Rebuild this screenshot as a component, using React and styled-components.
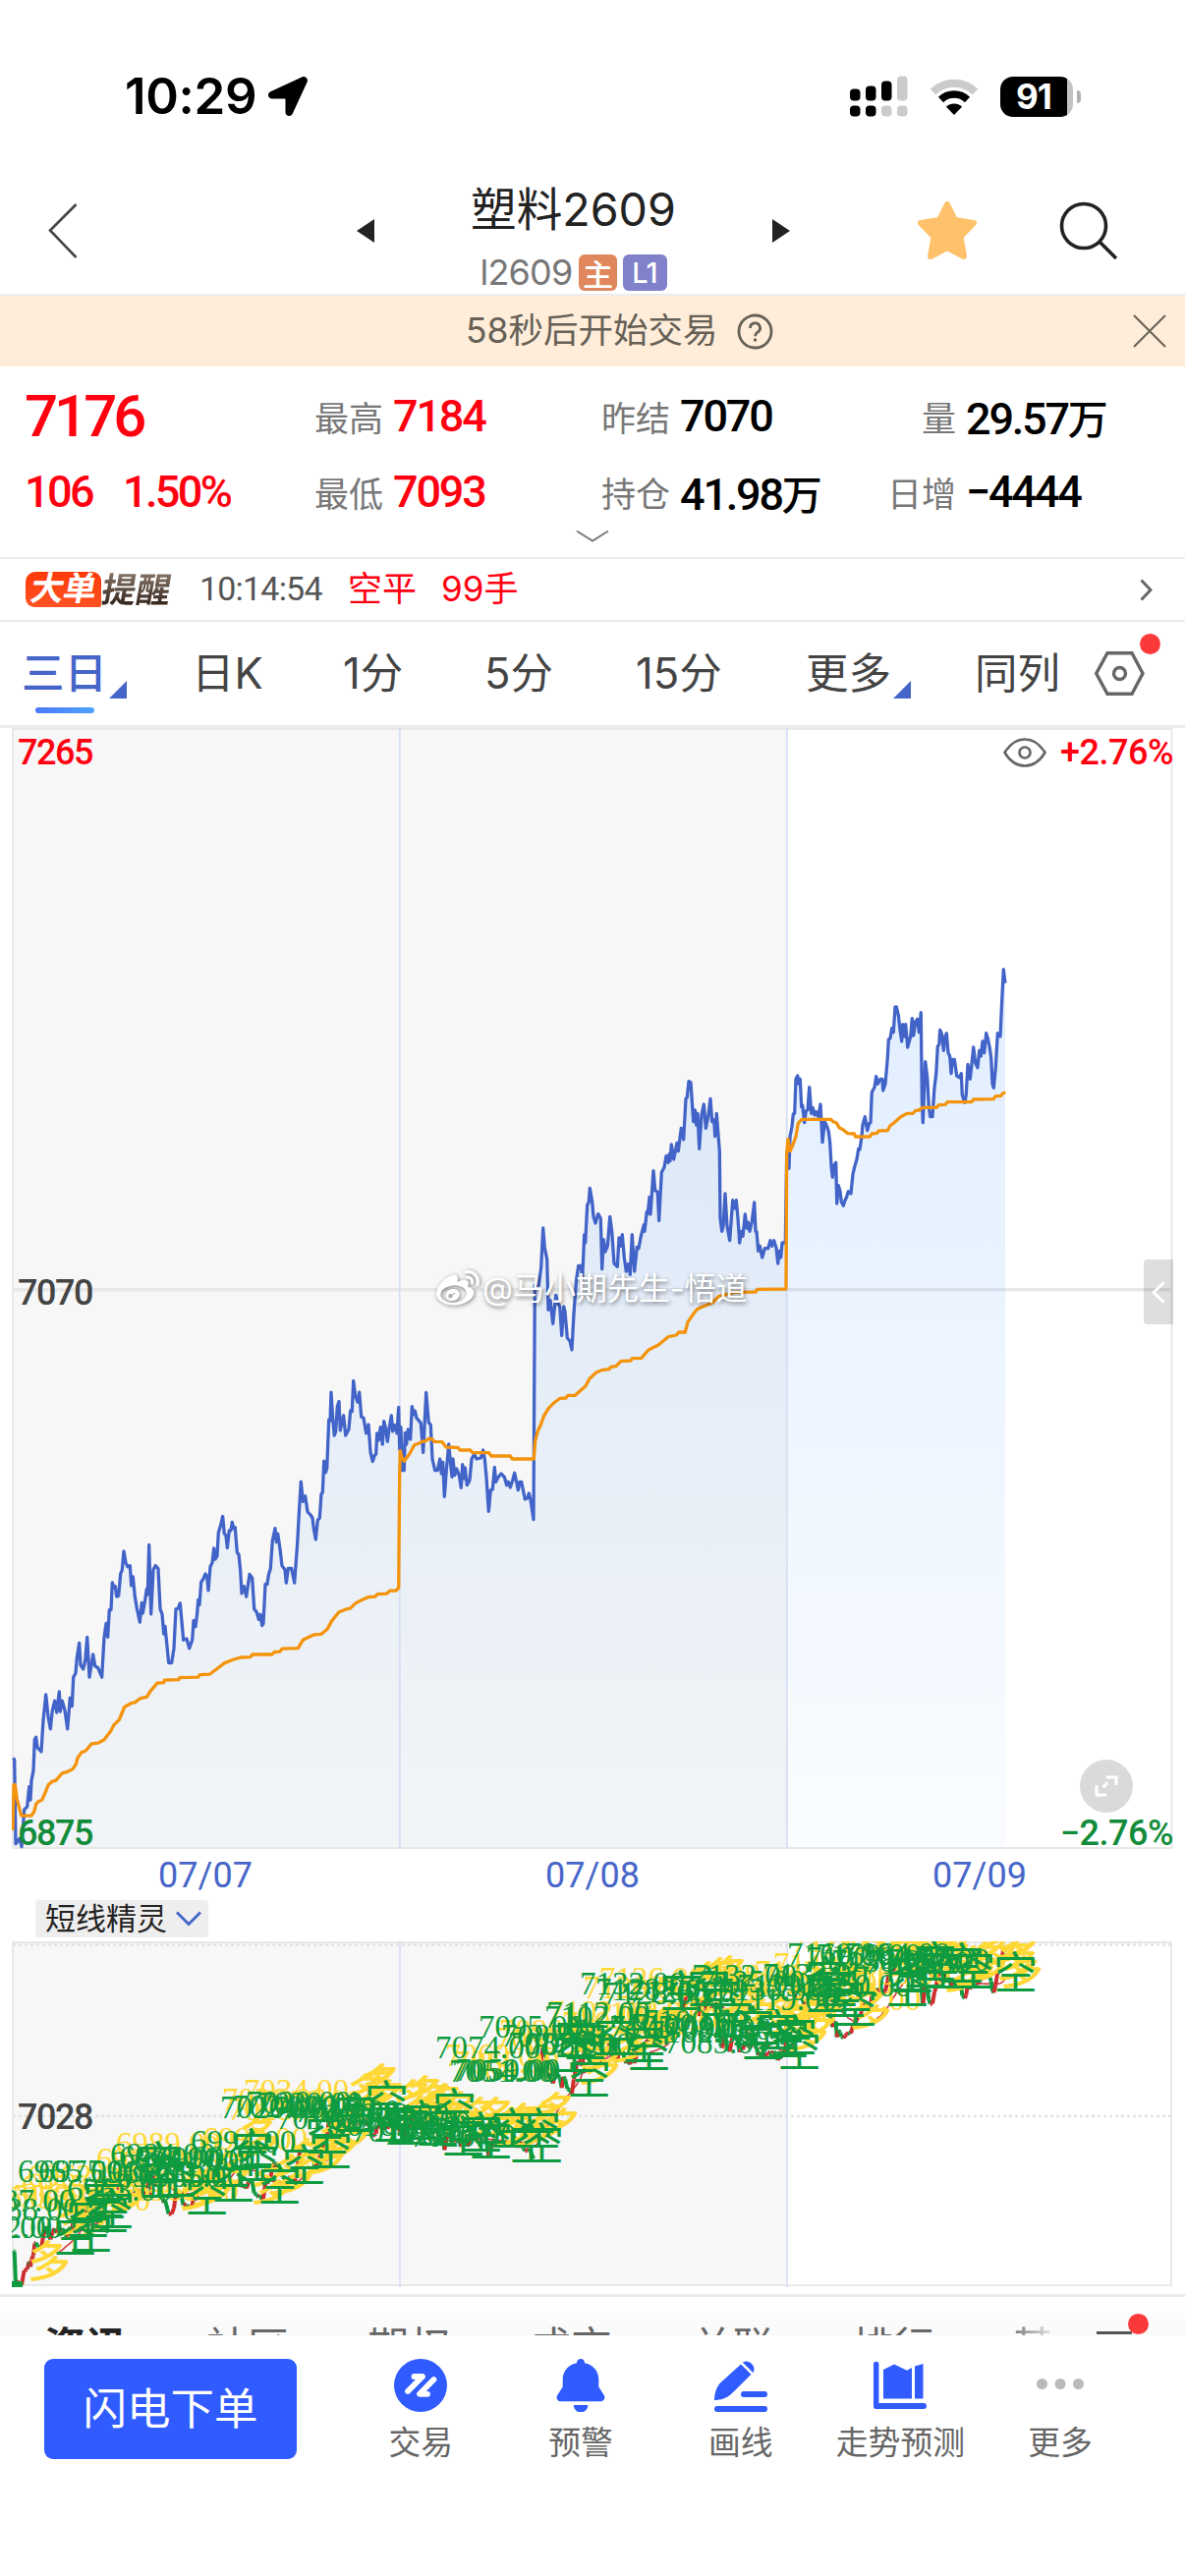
import React from 'react';
import styled, { createGlobalStyle } from 'styled-components';
import { FaLocationArrow, FaWeibo } from 'react-icons/fa';

const GlobalStyle = createGlobalStyle`
  * {
    box-sizing: border-box;
  }
  body {
    margin: 0;
    background: #fff;
    font-family: Inter, 'Noto Sans CJK SC', sans-serif;
    color: #222;
  }
  svg {
    display: block;
  }
`;

const NUMERIC = `Roboto, 'Noto Sans CJK SC', sans-serif`;

const Screen = styled.div`
  width: 1206px;
  height: 2622px;
  overflow: hidden;
  display: flex;
  flex-direction: column;
  background: #fff;
`;

const StatusBar = styled.div`
  height: 178px;
  padding: 73px 106px 0 127px;
  display: flex;
  align-items: flex-start;
  justify-content: space-between;
  flex-shrink: 0;
`;

const Clock = styled.div`
  display: flex;
  align-items: center;
  gap: 12px;
  height: 50px;
  font-size: 51px;
  font-weight: 600;
  line-height: 50px;
  letter-spacing: -0.3px;
  color: #000;
`;

const StatusIcons = styled.div`
  display: flex;
  align-items: center;
  gap: 22px;
  height: 50px;
`;

const Battery = styled.div`
  display: flex;
  align-items: center;
  gap: 4px;
`;

const BatteryBody = styled.div`
  width: 74px;
  height: 41px;
  border-radius: 13px;
  background: linear-gradient(90deg, #000 68px, #c4c4c4 68px);
  color: #fff;
  font-size: 35px;
  font-weight: 700;
  line-height: 41px;
  padding-left: 16px;
  letter-spacing: -1px;
`;

const BatteryNub = styled.div`
  width: 4px;
  height: 13px;
  border-radius: 0 4px 4px 0;
  background: #b0b0b0;
`;

const Header = styled.div`
  height: 123px;
  flex-shrink: 0;
  display: grid;
  grid-template-columns: 362px 112px 219px 238px 142px 1fr;
  border-bottom: 2px solid #ececec;
`;

const HeaderCell = styled.div`
  padding: ${({ $pad }) => $pad};
`;

const Titles = styled.div`
  display: flex;
  flex-direction: column;
  align-items: center;
`;

const Title = styled.div`
  font-size: 46.6px;
  line-height: 56px;
  margin-top: 7px;
  white-space: nowrap;
`;

const SubTitle = styled.div`
  display: flex;
  align-items: center;
  gap: 6px;
  height: 38px;
  margin-top: 17px;
  font-size: 36px;
  letter-spacing: -0.8px;
  color: #777;
  white-space: nowrap;
`;

const Badge = styled.span`
  display: flex;
  align-items: center;
  justify-content: center;
  height: 37px;
  width: ${({ $width }) => $width}px;
  border-radius: 6px;
  background: ${({ $color }) => $color};
  color: #fff;
  font-size: ${({ $size }) => $size}px;
  font-weight: 500;
`;

const Notice = styled.div`
  height: 72px;
  flex-shrink: 0;
  display: flex;
  align-items: center;
  padding: 0 19px 0 474px;
  gap: 19px;
  background: #ffedd9;
  color: #666056;
  font-size: 35.5px;
  line-height: 72px;

  svg:last-child {
    margin-left: auto;
  }
`;

const Quote = styled.div`
  height: 196px;
  flex-shrink: 0;
  position: relative;
  border-bottom: 2px solid #eee;
  padding-top: 12px;
  font-family: ${NUMERIC};
`;

const QuoteRow = styled.div`
  height: 77px;
  display: grid;
  grid-template-columns: 295px 292px 291px 1fr;
  align-items: center;
  padding-left: 25px;
  white-space: nowrap;
`;

const LastPrice = styled.div`
  font-size: 60px;
  font-weight: 500;
  letter-spacing: -4px;
  line-height: 74px;
  color: #ff0010;
`;

const Change = styled.div`
  display: flex;
  gap: 31px;
  font-size: 45px;
  font-weight: 500;
  letter-spacing: -2.6px;
  color: #ff0010;
`;

const Stat = styled.div`
  display: flex;
  align-items: center;
  gap: 10px;
  font-size: 45px;
  font-weight: 500;
  letter-spacing: -2.2px;
  color: ${({ $up }) => ($up ? '#ff0010' : '#000')};
`;

const StatLabel = styled.span`
  width: 70px;
  font-size: 35px;
  font-weight: 400;
  letter-spacing: 0;
  text-align: right;
  color: #777;
`;

const Unit = styled.span`
  font-size: 41px;
  font-weight: 500;
`;

const ExpandArrow = styled.svg`
  position: absolute;
  left: 586px;
  bottom: 14px;
`;

const AlertRow = styled.div`
  height: 64px;
  flex-shrink: 0;
  display: flex;
  align-items: center;
  padding: 0 33px 0 26px;
  border-bottom: 2px solid #ececec;
  font-size: 35px;
  line-height: 44px;
  white-space: nowrap;
`;

const AlertTag = styled.div`
  width: 77px;
  height: 36px;
  border-radius: 10px 9px 2px 9px;
  background: linear-gradient(#ff3a08, #ff5224);
  color: #fff;
  font-size: 34px;
  font-weight: 700;
  line-height: 34px;
  text-align: center;
  letter-spacing: -1px;

  span {
    display: block;
    transform: skewX(-10deg);
  }
`;

const AlertName = styled.div`
  width: 71px;
  margin: 0 28px 0 1px;
  font-size: 35px;
  font-weight: 700;
  line-height: 38px;
  background: linear-gradient(#8d7a6c, #2c1d14);
  -webkit-background-clip: text;
  background-clip: text;
  color: transparent;
  transform: skewX(-10deg);
`;

const AlertTime = styled.div`
  width: 151px;
  padding-bottom: 2px;
  font-family: ${NUMERIC};
  font-size: 34px;
  letter-spacing: -0.8px;
  color: #555;
`;

const AlertText = styled.div`
  display: flex;
  gap: 25px;
  padding-bottom: 3px;
  color: #ff0010;
  flex: 1;
`;

const Tabs = styled.div`
  height: 108px;
  flex-shrink: 0;
  display: grid;
  grid-template-columns: 173px 154px 144px 154px 173px 172px 119px 1fr;
  padding-left: 22px;
  border-bottom: 3px solid #ececec;
  font-size: 43.5px;
  line-height: 105px;
  color: #444;
  white-space: nowrap;
`;

const Tab = styled.div`
  position: relative;
  color: ${({ $active }) => ($active ? '#4565c8' : 'inherit')};
  font-weight: ${({ $active }) => ($active ? 500 : 400)};
`;

const Corner = styled.span`
  position: absolute;
  left: 89px;
  top: 60px;
  width: 18px;
  height: 18px;
  background: #4565c8;
  clip-path: polygon(100% 0, 100% 100%, 0 100%);
`;

const Underline = styled.span`
  position: absolute;
  left: 14px;
  top: 87px;
  width: 60px;
  height: 6px;
  border-radius: 3px;
  background: linear-gradient(90deg, #4b78f8, #4fa3ff);
`;

const RedDot = styled.span`
  position: absolute;
  right: ${({ $right }) => $right}px;
  top: ${({ $top }) => $top}px;
  width: 21px;
  height: 21px;
  border-radius: 50%;
  background: #fa3a3a;
`;

const ChartBox = styled.div`
  position: relative;
  height: ${({ $height }) => $height}px;
  width: 1182px;
  margin-left: 12px;
  flex-shrink: 0;
`;

const AxisLabel = styled.div`
  position: absolute;
  top: ${({ $top }) => $top}px;
  ${({ $side }) => ($side === 'right' ? 'right: 0' : 'left: 6px')};
  display: flex;
  align-items: center;
  gap: 14px;
  font-family: ${NUMERIC};
  font-size: 36px;
  font-weight: 500;
  line-height: 36px;
  letter-spacing: ${({ $side }) => ($side === 'right' ? -0.5 : -1.5)}px;
  color: ${({ $color }) => $color};
`;

const Watermark = styled.div`
  position: absolute;
  left: 432px;
  top: 548px;
  display: flex;
  align-items: center;
  gap: 3px;
  font-size: 32px;
  line-height: 46px;
  color: #fff;
  white-space: nowrap;
  text-shadow: 1px 2px 4px rgba(0, 0, 0, 0.5);

  svg {
    filter: drop-shadow(1px 1px 2px rgba(0, 0, 0, 0.5));
  }
`;

const SideHandle = styled.div`
  position: absolute;
  right: 0;
  top: 541px;
  width: 30px;
  height: 66px;
  border-radius: 4px 0 0 4px;
  background: rgba(0, 0, 0, 0.13);
  padding: 22px 0 0 7px;
`;

const FullScreen = styled.div`
  position: absolute;
  left: 1087px;
  top: 1050px;
  width: 54px;
  height: 54px;
  border-radius: 50%;
  background: #dadada;
  display: flex;
  align-items: center;
  justify-content: center;
`;

const Dates = styled.div`
  height: 51px;
  flex-shrink: 0;
  display: grid;
  grid-template-columns: repeat(3, 394px);
  padding-left: 12px;
  text-align: center;
  font-family: ${NUMERIC};
  font-size: 36px;
  line-height: 53px;
  color: #4766c8;
`;

const IndicatorBar = styled.div`
  height: 42px;
  flex-shrink: 0;
  padding-left: 36px;
`;

const IndicatorButton = styled.div`
  width: 176px;
  height: 38px;
  border-radius: 4px;
  background: #eee;
  display: flex;
  align-items: center;
  gap: 9px;
  padding-left: 10px;
  font-size: 31px;
  line-height: 36px;
  white-space: nowrap;
`;

const NewsTabs = styled.div`
  position: relative;
  margin-top: 7px;
  height: 42px;
  flex-shrink: 0;
  overflow: hidden;
  display: grid;
  grid-template-columns: 165px 164px 165px 165px 163px 163px 1fr;
  padding: 26px 0 0 45px;
  border-top: 3px solid #eaeaea;
  background: linear-gradient(#fff, #f9f9f9);
  font-size: 42px;
  line-height: 50px;
  color: #666;
`;

const NewsTab = styled.div`
  font-weight: ${({ $active }) => ($active ? 700 : 400)};
  color: ${({ $active }) => ($active ? '#222' : 'inherit')};
`;

const FadedTab = styled.div`
  width: 44px;
  overflow: hidden;
  background: linear-gradient(90deg, #777, #eee);
  -webkit-background-clip: text;
  background-clip: text;
  color: transparent;
`;

const MenuLine = styled.span`
  position: absolute;
  right: 54px;
  top: 35px;
  width: 36px;
  height: 3px;
  background: #555;
`;

const Toolbar = styled.div`
  height: 245px;
  flex-shrink: 0;
  display: flex;
  align-items: flex-start;
  padding: 24px 45px 0 45px;
  background: #fff;
`;

const OrderButton = styled.div`
  width: 257px;
  height: 102px;
  margin-right: 45px;
  border-radius: 9px;
  background: #2f5bff;
  color: #fff;
  font-size: 44.5px;
  line-height: 103px;
  text-align: center;
`;

const Tool = styled.div`
  width: 162.7px;
  display: flex;
  flex-direction: column;
  align-items: center;
  gap: 9px;
  font-size: 32.8px;
  line-height: 44px;
  color: #666;
  white-space: nowrap;
`;

// Each trace is recorded on its own grid: origin + step, then flat x,y pairs.
const PRICE = [
  {
    x: 0,
    y: 1280,
    sx: 3,
    sy: 2.376,
    d: `41,1210 44,1215 48,1418 60,1405 66,1425 74,1335 83,1328 89,1280 93,1312 96,1265 102,1240 106,1165 110,1160 114,1185 126,1195 132,1120 140,1057 147,1110 154,1140 160,1095 167,1072 173,1100 181,1050 184,1098 190,1072 198,1095 206,1140 214,1065 220,1085 224,1015 231,1005 235,968 242,932 246,985 254,995 260,975 266,918 273,1015 284,960 290,988 299,992 311,1015 318,918 324,885 329,918 334,852 339,852 343,786 348,798 352,795 356,820 362,818 368,765 373,755 378,710 384,738 390,748 397,745 401,793 406,772 412,820 418,848 427,882 433,835 436,860 443,828 448,802 451,815 455,695 461,862 468,755 475,745 483,752 489,850 495,862 500,910 504,892 515,980 524,980 531,945 537,850 544,848 550,836 555,880 560,925 570,922 578,945 587,925 591,878 597,893 602,860 605,828 609,840 614,785 621,777 627,765 632,772 636,805 642,748 648,738 653,703 657,730 663,722 667,665 673,650 680,626 685,668 690,672 694,702 700,660 705,660 709,640 713,655 718,653 724,713 729,718 734,758 738,812 745,795 752,820 762,766 770,775 776,850 784,858 790,875 795,863 800,890 804,885 810,790 816,790 820,768 826,752 832,685 840,655 844,688 848,668 855,705 861,745 870,755 874,787 880,752 890,752 899,787 908,690 913,620 919,542 925,590 932,577 939,615 948,622 954,630 958,655 964,682 970,635 976,630 981,572 985,568 989,492 994,520 998,510 1004,392 1008,395 1011,326 1016,390 1021,430 1025,420 1030,360 1035,348 1039,418 1043,400 1049,382 1055,430 1065,415 1070,370 1075,372 1079,298 1085,335 1092,350 1097,326 1103,385 1110,388 1118,425 1125,404 1131,470 1138,493 1143,480 1148,475 1151,425 1156,442 1162,410 1168,452 1172,396 1177,410 1183,445 1188,415 1195,382 1199,420 1205,405 1212,425 1217,362`,
  },
  {
    x: 400,
    y: 1080,
    sx: 3,
    sy: 3,
    d: `20,1185 24,1118 28,1250 34,1250 37,1135 41,1170 46,1125 53,1155 58,1055 62,1080 67,1068 72,1090 85,1105 92,1195 101,1012 109,1105 115,1110 120,1215 128,1250 136,1250 143,1215 148,1260 152,1225 157,1330 163,1250 170,1170 175,1220 180,1270 183,1215 188,1265 194,1245 202,1265 208,1303 212,1232 216,1275 220,1242 226,1295 234,1280 240,1215 248,1200 255,1215 268,1212 275,1188 280,1215 285,1270 292,1375 298,1310 304,1308 310,1240 314,1285 320,1272 330,1260 340,1270 347,1295 352,1285 358,1302 365,1280 371,1258 378,1290 382,1310 387,1285 392,1285 398,1315 403,1338 410,1335 415,1320 420,1340 429,1400 433,685 445,685 452,630 458,510 463,570 470,605 474,760 480,730 488,802 497,715 502,735 509,750 515,838 521,750 525,765 532,845 540,855 546,882 552,770 560,665 566,625 574,625 578,665 584,530 587,555 593,440 598,430 601,388 608,430 612,475 618,495 626,467 634,480 638,635 643,545 648,582 655,565 662,475 668,520 675,618 685,628 690,540 695,565 700,530 706,600 712,642 718,620 724,652 730,530 737,642 745,568 750,572 757,535 766,500 768,520 775,460 778,465 783,415 786,468 795,335 800,395 808,400 812,487 820,340 828,325 834,290 840,310 843,285 846,305 850,255 857,300 867,250 871,275 880,205 887,240 894,115 898,110 903,62 909,65 917,185 922,150 926,195 930,160 935,268 942,165 949,132 955,205 962,170 969,115 974,185 980,180 983,230 988,160 992,215 997,275 999,480 1004,520 1008,505 1014,405 1020,505 1028,548 1037,425 1042,450 1048,425 1053,480 1058,555 1063,520 1068,535 1075,468 1080,510 1084,492 1089,520 1096,490 1103,432 1107,520 1110,520 1115,580 1120,565 1127,600 1135,572 1145,572 1152,548 1157,565 1163,548 1170,570 1175,618 1180,580 1184,600 1188,555 1198,555`,
  },
  {
    x: 780,
    y: 960,
    sx: 3,
    sy: 3,
    d: `62,640 69,688 72,590 78,560 82,522 86,520 90,415 95,405 99,430 103,415 107,500 110,495 116,548 121,512 126,510 131,440 137,520 142,503 147,525 152,515 158,530 165,492 171,608 178,545 185,560 190,575 194,610 198,680 202,715 206,680 212,670 215,795 220,740 225,758 229,790 235,802 240,785 245,775 250,758 258,765 264,705 270,680 276,660 281,628 285,630 291,590 294,555 301,530 308,572 314,550 318,548 322,455 330,440 335,407 340,430 348,415 354,415 356,450 363,430 370,350 373,295 378,290 383,260 388,272 393,195 397,195 403,220 408,265 413,300 416,248 421,285 425,248 431,318 440,285 445,230 449,282 455,240 461,232 466,272 472,212 475,480 478,548 485,362 491,410 496,500 500,530 507,530 513,440 518,400 523,315 527,310 530,265 536,280 541,328 545,290 550,275 555,335 560,345 564,398 568,355 574,355 581,405 590,410 595,398 598,465 606,487 610,460 615,370 622,415 627,370 632,318 638,365 645,380 650,328 655,345 660,300 665,335 671,275 676,290 682,320 686,350 690,430 694,442 700,380 706,275 714,285 718,200 724,80 729,122`,
  },
];

const AVERAGE = [
  {
    x: 0,
    y: 1280,
    sx: 3,
    sy: 2.376,
    d: `39,1385 42,1275 46,1275 52,1310 65,1350 96,1350 104,1340 110,1322 118,1315 128,1312 136,1298 148,1275 160,1267 170,1265 190,1247 208,1243 222,1237 232,1225 237,1210 250,1196 260,1194 280,1176 300,1174 318,1166 338,1145 348,1130 364,1118 380,1087 400,1078 412,1076 428,1066 448,1063 458,1050 480,1029 500,1028 502,1022 545,1021 548,1016 605,1015 610,1009 640,1008 660,996 685,981 710,973 735,967 765,966 770,960 830,960 838,954 855,953 862,946 910,945 925,925 940,919 960,912 980,911 1000,898 1012,880 1035,857 1055,851 1070,848 1085,836 1105,828 1125,821 1145,820 1152,814 1180,813 1190,806 1208,806 1217,799`,
  },
  {
    x: 400,
    y: 1080,
    sx: 3,
    sy: 3,
    d: `20,1260 22,1190 27,1210 34,1222 50,1200 65,1172 78,1168 88,1162 100,1160 108,1153 120,1155 126,1162 150,1163 162,1179 198,1180 204,1188 236,1188 243,1196 293,1196 300,1206 358,1206 364,1215 430,1215 434,1160 442,1130 452,1108 460,1085 475,1060 490,1045 510,1030 528,1029 534,1021 556,1021 570,1008 588,992 600,970 620,951 640,943 660,941 665,934 680,932 697,916 726,915 730,908 758,907 780,882 810,867 840,842 865,837 872,828 892,828 900,797 915,775 928,758 945,750 975,738 995,718 1020,712 1040,706 1107,705 1112,697 1200,696`,
  },
  {
    x: 780,
    y: 960,
    sx: 3,
    sy: 3,
    d: `62,640 66,598 72,635 80,618 90,590 97,550 108,538 196,538 205,546 213,548 222,563 235,570 248,581 268,582 272,591 316,591 322,582 338,580 343,573 370,572 378,557 390,548 410,530 430,520 448,520 455,511 467,510 475,502 520,502 526,494 547,493 552,485 627,485 632,477 693,476 700,467 715,467 722,458 730,455`,
  },
];

const decode = (traces) =>
  traces.flatMap(({ x, y, sx, sy, d }) =>
    d.split(/\s+/).map((pair) => {
      const [px, py] = pair.split(',').map(Number);
      return [x + px / sx, y + py / sy];
    })
  );

const toPoints = (list) =>
  list.map(([x, y]) => `${x.toFixed(1)},${y.toFixed(1)}`).join(' ');

const pricePoints = decode(PRICE);
const averagePoints = decode(AVERAGE);

// The lower pane shares the time axis and has a flatter price scale.
const lowerPrice = pricePoints.map(([x, y]) => [x, 2107 + (y - 1312) * 0.385]);

const MA_SPAN = 22;
const lowerAverage = lowerPrice.slice(MA_SPAN).map(([x], i) => {
  const span = lowerPrice.slice(i, i + MA_SPAN);
  return [x, span.reduce((sum, [, y]) => sum + y, 0) / MA_SPAN];
});

const SELL_PRICES = [
  ['6887.00', -31, 2251], ['6888.00', -27, 2260], ['6890.00', -54, 2278], ['6892.00', -44, 2278],
  ['6965.00', 18, 2221], ['6975.00', 39, 2221], ['6963.00', 68, 2240], ['6961.00', 92, 2222],
  ['6967.00', 118, 2226], ['6984.00', 112, 2204], ['6984.00', 121, 2207], ['6981.00', 136, 2211],
  ['6965.00', 140, 2226], ['6994.00', 194, 2191], ['6990.00', 158, 2208], ['7020.00', 224, 2156],
  ['7024.00', 237, 2155], ['7030.00', 250, 2151], ['7030.00', 262, 2152], ['7016.00', 281, 2167],
  ['7026.00', 276, 2156], ['7018.00', 300, 2160], ['7021.00', 318, 2167], ['7016.00', 336, 2174],
  ['7020.00', 350, 2163], ['7014.00', 358, 2180], ['7015.00', 372, 2172], ['7012.00', 390, 2183],
  ['7013.00', 404, 2176], ['7010.00', 418, 2185], ['7074.00', 443, 2095], ['7054.00', 460, 2119],
  ['7051.00', 457, 2119], ['7059.00', 463, 2118], ['7095.00', 487, 2074], ['7085.00', 510, 2083],
  ['7087.00', 517, 2091], ['7081.00', 536, 2092], ['7102.00', 554, 2064], ['7112.00', 556, 2060],
  ['7132.00', 590, 2030], ['7128.00', 606, 2036], ['7128.00', 614, 2040], ['7123.00', 640, 2038],
  ['7105.00', 620, 2074], ['7100.00', 642, 2072], ['7102.00', 660, 2079], ['7100.00', 654, 2068],
  ['7090.00', 678, 2076], ['7085.00', 676, 2090], ['7132.00', 704, 2022], ['7135.00', 712, 2028],
  ['7130.00', 730, 2036], ['7129.00', 750, 2032], ['7119.00', 746, 2046], ['7133.00', 776, 2021],
  ['7160.00', 801, 2000], ['7162.00', 820, 2004], ['7169.00', 830, 2001], ['7158.00', 846, 2007],
  ['7150.00', 820, 2032], ['7164.00', 860, 2000], ['7160.00', 880, 2009], ['7157.00', 900, 2006],
];

const BUY_PRICES = [
  ['6950.00', -20, 2246], ['6953.00', 6, 2248], ['6955.00', 22, 2236], ['6960.00', 46, 2250],
  ['6962.00', 28, 2226], ['6989.00', 118, 2193], ['6985.00', 98, 2209], ['6970.00', 84, 2232],
  ['6975.00', 116, 2226], ['6968.00', 136, 2240], ['6992.00', 206, 2188], ['7034.00', 248, 2139],
  ['7026.00', 226, 2148], ['7028.00', 232, 2158], ['7029.00', 262, 2150], ['7060.00', 453, 2103],
  ['7065.00', 462, 2110], ['7068.00', 460, 2118], ['7090.00', 508, 2078], ['7088.00', 504, 2086],
  ['7102.00', 558, 2059], ['7104.00', 572, 2070], ['7108.00', 604, 2060], ['7126.00', 610, 2025],
  ['7120.00', 594, 2034], ['7101.00', 640, 2066], ['7106.00', 668, 2058], ['7128.00', 708, 2022],
  ['7126.00', 734, 2030], ['7118.00', 746, 2060], ['7140.00', 787, 2010], ['7142.00', 768, 2018],
  ['7170.00', 806, 1987], ['7172.00', 820, 1986], ['7175.00', 836, 1988], ['7171.00', 856, 1985],
  ['7173.00', 874, 1987], ['7165.00', 860, 2020], ['7155.00', 802, 2030], ['7152.00', 830, 2046],
];

const SELL_MARKS = [
  [55, 2293], [71, 2290], [68, 2275], [88, 2270], [93, 2266], [85, 2256], [142, 2235],
  [157, 2234], [140, 2218], [189, 2252], [216, 2239], [235, 2205], [240, 2218],
  [263, 2241], [288, 2221], [315, 2205], [311, 2190], [340, 2168], [372, 2156],
  [380, 2178], [394, 2181], [408, 2176], [424, 2182], [441, 2164],
  [450, 2192], [468, 2188], [478, 2195], [500, 2184], [519, 2199], [530, 2199],
  [527, 2184], [563, 2107], [565, 2092], [574, 2094], [578, 2132], [605, 2090],
  [634, 2097], [639, 2105], [672, 2044], [700, 2040], [712, 2050],
  [724, 2072], [745, 2080], [755, 2094], [770, 2084], [780, 2092], [792, 2104], [788, 2089],
  [820, 2046], [830, 2040], [838, 2051], [849, 2060], [820, 2030], [902, 2040],
  [907, 2026], [920, 2021], [930, 2014], [938, 2022], [958, 2016], [969, 2022],
  [1012, 2025],
];

const BUY_MARKS = [
  [28, 2318], [55, 2272], [66, 2276], [84, 2258], [105, 2250], [182, 2246], [194, 2242], [212, 2226],
  [242, 2192], [255, 2240], [276, 2230], [292, 2214], [308, 2210], [322, 2196], [334, 2186], [352, 2148],
  [364, 2142], [368, 2138], [400, 2154], [412, 2150], [422, 2156], [432, 2158], [448, 2166], [468, 2172],
  [484, 2172], [500, 2182], [512, 2178], [520, 2182], [534, 2176], [546, 2167], [566, 2090], [588, 2118],
  [590, 2104], [620, 2096], [640, 2084], [656, 2080], [700, 2034], [712, 2030], [722, 2028], [734, 2044],
  [748, 2056], [776, 2068], [790, 2074], [800, 2084], [806, 2072], [798, 2044], [820, 2050], [844, 2040],
  [864, 2062], [850, 2036], [902, 2008], [918, 2000], [930, 1994], [944, 1996], [954, 2002], [960, 2024],
  [970, 2018], [982, 2014], [992, 1998], [1014, 2012], [1018, 2020], [1014, 1990],
];

const PriceChart = () => {
  const last = pricePoints[pricePoints.length - 1];
  const area = `12,1880 ${toPoints(pricePoints)} ${last[0]},1880`;
  return (
    <svg width="1182" height="1142" viewBox="12 741 1182 1142">
      <defs>
        <linearGradient id="area" gradientUnits="userSpaceOnUse" x1="0" y1="985" x2="0" y2="1880">
          <stop offset="0" stopColor="#1a80ff" stopOpacity="0.13" />
          <stop offset="1" stopColor="#1a80ff" stopOpacity="0.022" />
        </linearGradient>
      </defs>
      <rect x="12" y="741" width="789" height="1140" fill="#f7f7f7" />
      <rect x="13" y="742" width="1179.5" height="1139" fill="none" stroke="#e8e8e8" strokeWidth="2" />
      <path d="M12 1312.8H1193" stroke="#e8e8e8" strokeWidth="3.6" />
      <polygon points={area} fill="url(#area)" />
      <path d="M406.800 741V1882M800.800 741V1882" stroke="#d6def5" strokeWidth="1.8" />
      <polyline points={toPoints(pricePoints)} fill="none" stroke="#4264c8" strokeWidth="3.3" strokeLinejoin="round" />
      <polyline points={toPoints(averagePoints)} fill="none" stroke="#f4930c" strokeWidth="3.3" strokeLinejoin="round" />
    </svg>
  );
};

const SignalChart = () => (
  <svg width="1182" height="352" viewBox="12 1976 1182 352">
    <rect x="12" y="1976" width="789" height="351" fill="#f7f7f7" />
    <rect x="13" y="1977" width="1179" height="349" fill="none" stroke="#e8e8e8" strokeWidth="2" />
    <path d="M13 1979.5H1192M13 2154H1192" stroke="#e2e2e2" strokeWidth="2.6" strokeDasharray="3 3" />
    <path d="M407 1976V2328M801 1976V2328" stroke="#d6def5" strokeWidth="1.6" />
    <polyline points={toPoints(lowerAverage)} fill="none" stroke="#d23c3c" strokeWidth="1.6" />
    {lowerPrice.slice(1).map(([x, y], i) => {
      const [px, py] = lowerPrice[i];
      if (Math.abs(y - py) > 60) return null;
      return (
        <line key={i} x1={px} y1={py} x2={x} y2={y} stroke={y <= py ? '#cd2d2d' : '#0f9b40'} strokeWidth="4" />
      );
    })}
    <rect x="12" y="2322" width="11" height="6" fill="#0f9b40" />
    <g fill="#ffd835" fontFamily="'Liberation Serif', serif" fontSize="33">
      {BUY_PRICES.map(([label, x, y], i) => (
        <text key={i} x={x} y={y}>{label}</text>
      ))}
    </g>
    <g fill="#ffd835" fontFamily="'Noto Sans CJK SC', sans-serif" fontSize="44" fontWeight="500">
      {BUY_MARKS.map(([x, y], i) => (
        <text key={i} x={x} y={y}>多</text>
      ))}
    </g>
    <g fill="#0f9b40" fontFamily="'Liberation Serif', serif" fontSize="33">
      {SELL_PRICES.map(([label, x, y], i) => (
        <text key={i} x={x} y={y}>{label}</text>
      ))}
    </g>
    <g fill="#0f9b40" fontFamily="'Noto Sans CJK SC', sans-serif" fontSize="45" fontWeight="400">
      {SELL_MARKS.map(([x, y], i) => (
        <text key={i} x={x - 1} y={y}>空</text>
      ))}
    </g>
  </svg>
);

const SignalIcon = () => (
  <svg width="59" height="42" viewBox="865 76.500 59 42">
    <g fill="#000">
      <rect x="865" y="90" width="10.500" height="12" rx="4" />
      <rect x="881" y="87" width="10.500" height="15" rx="4" />
      <rect x="897" y="82" width="10.500" height="20" rx="4" />
      <rect x="865" y="107" width="10.500" height="11" rx="4" />
      <rect x="881" y="107" width="10.500" height="11" rx="4" />
    </g>
    <g fill="#cbcbcb">
      <rect x="913" y="77" width="10.500" height="25" rx="4" />
      <rect x="897" y="107" width="10.500" height="11" rx="4" />
      <rect x="913" y="107" width="10.500" height="11" rx="4" />
    </g>
  </svg>
);

const WifiIcon = () => (
  <svg width="50" height="37" viewBox="0 0 50 37" fill="none">
    <path d="M3.500 13.500a31 31 0 0 1 43 0" stroke="#cbcbcb" strokeWidth="8" />
    <path d="M11.500 21.500a19.500 19.500 0 0 1 27 0" stroke="#000" strokeWidth="7.500" />
    <path d="M25 37l-8-8.200a11.500 11.500 0 0 1 16 0z" fill="#000" />
  </svg>
);

const TradeIcon = () => (
  <svg width="54" height="54" viewBox="0 0 54 54" fill="none">
    <circle cx="27" cy="27" r="27" fill="#2f5bff" />
    <path d="M14 33L29 18H20.500M40.500 21L26 35.800H34" stroke="#fff" strokeWidth="5.800" strokeLinecap="round" strokeLinejoin="round" />
  </svg>
);

const BellIcon = () => (
  <svg width="54" height="54" viewBox="0 0 54 54" fill="#2f5bff">
    <path d="M27 0c2.600 0 4 1.800 4 4.200C39.500 6 45.300 12 45.300 21v7.500l5.300 8.200c2 3.200 0 6.600-3.600 6.600H7c-3.600 0-5.600-3.400-3.600-6.600l5.300-8.200V21c0-9 5.800-15 14.300-16.800C23 1.800 24.400 0 27 0z" />
    <path d="M19.800 47h14.600a7.300 7.300 0 0 1-14.600 0z" />
  </svg>
);

const DrawIcon = () => (
  <svg width="54" height="54" viewBox="0 0 54 54" fill="#2f5bff">
    <path d="M27 5.500l10.500 10.300L17.500 35.500C13 40 6 42 0 42c0-6.500 2-13 6-17.500z" />
    <path d="M28.800 3.500a8 8 0 0 1 10.700 10.700z" />
    <rect x="27" y="33" width="27" height="6" rx="3" />
    <rect x="0" y="48" width="54" height="6" rx="3" />
  </svg>
);

const TrendIcon = () => (
  <svg width="54" height="54" viewBox="0 0 54 54" fill="#2f5bff">
    <path d="M0 5.500a2.700 2.700 0 0 1 5.400 0V45H51a3 3 0 0 1 0 6H2.500A2.500 2.500 0 0 1 0 48.500z" />
    <path d="M10 11L21 5.500 34 11.800 39 9V40.500H10z" />
    <path d="M42 7.500L50.500 5V40.500H42z" />
  </svg>
);

const DotsIcon = () => (
  <svg width="54" height="54" viewBox="0 0 54 54" fill="#bababa">
    <circle cx="8.500" cy="25.500" r="5.500" />
    <circle cx="27" cy="25.500" r="5.500" />
    <circle cx="45.500" cy="25.500" r="5.500" />
  </svg>
);

const TOOLS = [
  ['交易', TradeIcon],
  ['预警', BellIcon],
  ['画线', DrawIcon],
  ['走势预测', TrendIcon],
  ['更多', DotsIcon],
];

const App = () => {
  return (
    <Screen>
      <GlobalStyle />
      <StatusBar>
        <Clock>
          10:29
          <FaLocationArrow size={40} />
        </Clock>
        <StatusIcons>
          <SignalIcon />
          <WifiIcon />
          <Battery>
            <BatteryBody>91</BatteryBody>
            <BatteryNub />
          </Battery>
        </StatusIcons>
      </StatusBar>

      <Header>
        <HeaderCell $pad="29px 0 0 48px">
          <svg width="32" height="56" fill="none" stroke="#444" strokeWidth="2.600">
            <path d="M29.500 1L3 27.500 29.500 55" />
          </svg>
        </HeaderCell>
        <HeaderCell $pad="45px 0 0 0">
          <svg width="19" height="24" fill="#222">
            <path d="M19 0v24L1 12z" />
          </svg>
        </HeaderCell>
        <Titles>
          <Title>塑料2609</Title>
          <SubTitle>
            l2609
            <Badge $width={39} $size={31} $color="#e0885c">主</Badge>
            <Badge $width={45} $size={29} $color="#8080cb">L1</Badge>
          </SubTitle>
        </Titles>
        <HeaderCell $pad="45px 0 0 93px">
          <svg width="19" height="24" fill="#222">
            <path d="M0 0v24L18 12z" />
          </svg>
        </HeaderCell>
        <HeaderCell $pad="26px 0 0 2px">
          <svg width="62" height="62" viewBox="0 0 62 62" fill="#ffc26b" stroke="#ffc26b" strokeWidth="6" strokeLinejoin="round">
            <path d="M31 4l8 16 19 3-13.500 14L48 57l-17-9-17 9 3.500-20L4 23l19-3z" />
          </svg>
        </HeaderCell>
        <HeaderCell $pad="26px 0 0 4px">
          <svg width="62" height="62" fill="none" stroke="#222" strokeWidth="3.600">
            <circle cx="26" cy="26" r="22.500" />
            <path d="M41 41l18 18" />
          </svg>
        </HeaderCell>
      </Header>

      <Notice>
        58秒后开始交易
        <svg width="37" height="37" viewBox="0 0 37 37" fill="none" stroke="#666056" strokeWidth="2.800">
          <circle cx="18.500" cy="18.500" r="16.500" />
          <path d="M13.500 15a5 5 0 1 1 7.500 4.200c-1.800 1.200-2.500 2-2.500 4" />
          <circle cx="18.500" cy="27" r="1" fill="#666056" strokeWidth="1.500" />
        </svg>
        <svg width="34" height="34" fill="none" stroke="#666056" strokeWidth="2">
          <path d="M1 1l32 32M33 1L1 33" />
        </svg>
      </Notice>

      <Quote>
        <QuoteRow>
          <LastPrice>7176</LastPrice>
          <Stat $up><StatLabel>最高</StatLabel>7184</Stat>
          <Stat><StatLabel>昨结</StatLabel>7070</Stat>
          <Stat><StatLabel>量</StatLabel><span>29.57<Unit>万</Unit></span></Stat>
        </QuoteRow>
        <QuoteRow>
          <Change><span>106</span><span>1.50%</span></Change>
          <Stat $up><StatLabel>最低</StatLabel>7093</Stat>
          <Stat><StatLabel>持仓</StatLabel><span>41.98<Unit>万</Unit></span></Stat>
          <Stat><StatLabel>日增</StatLabel>−4444</Stat>
        </QuoteRow>
        <ExpandArrow width="34" height="14" fill="none" stroke="#777" strokeWidth="2">
          <path d="M1 1.500l16 10 16-10" />
        </ExpandArrow>
      </Quote>

      <AlertRow>
        <AlertTag><span>大单</span></AlertTag>
        <AlertName>提醒</AlertName>
        <AlertTime>10:14:54</AlertTime>
        <AlertText><span>空平</span><span>99手</span></AlertText>
        <svg width="13" height="23" fill="none" stroke="#666" strokeWidth="3">
          <path d="M1.500 1.500l9.500 10-9.500 10" />
        </svg>
      </AlertRow>

      <Tabs>
        <Tab $active>三日<Corner /><Underline /></Tab>
        <Tab>日K</Tab>
        <Tab>1分</Tab>
        <Tab>5分</Tab>
        <Tab>15分</Tab>
        <Tab>更多<Corner /></Tab>
        <Tab>同列</Tab>
        <Tab>
          <svg width="54" height="78" viewBox="0 -30 54 78" fill="none" stroke="#666" strokeWidth="3.400">
            <path d="M16 1.700h25L52 22.500 41 43.300H16L4.700 22.500z" />
            <circle cx="28.500" cy="22.500" r="6" />
          </svg>
          <RedDot $right={25} $top={12} />
        </Tab>
      </Tabs>

      <ChartBox $height={1142}>
        <PriceChart />
        <AxisLabel $top={7} $color="#ff0010">7265</AxisLabel>
        <AxisLabel $top={557} $color="#444">7070</AxisLabel>
        <AxisLabel $top={1107} $color="#128c3a">6875</AxisLabel>
        <AxisLabel $top={7} $side="right" $color="#ff0010">
          <svg width="44" height="30" fill="none" stroke="#666" strokeWidth="2.600">
            <path d="M1.500 15C6 7.500 13 1.500 22 1.500S38 7.500 42.500 15C38 22.500 31 28.500 22 28.500S6 22.500 1.500 15z" />
            <circle cx="22" cy="15" r="5.500" />
          </svg>
          +2.76%
        </AxisLabel>
        <AxisLabel $top={1107} $side="right" $color="#128c3a">−2.76%</AxisLabel>
        <Watermark>
          <FaWeibo size={44} />
          @马小期先生-悟道
        </Watermark>
        <SideHandle>
          <svg width="16" height="23" fill="none" stroke="#fff" strokeWidth="3">
            <path d="M13.500 1.500L3 11.500l10.500 10" />
          </svg>
        </SideHandle>
        <FullScreen>
          <svg width="24" height="22" fill="none" stroke="#fff" strokeWidth="3">
            <path d="M12 2h10v8M2 10v10h10M12 11h-4M12 10v-3" />
          </svg>
        </FullScreen>
      </ChartBox>

      <Dates>
        <span>07/07</span>
        <span>07/08</span>
        <span>07/09</span>
      </Dates>

      <IndicatorBar>
        <IndicatorButton>
          短线精灵
          <svg width="26" height="16" fill="none" stroke="#4565c8" strokeWidth="2.800">
            <path d="M1 1.500l12 12 12-12" />
          </svg>
        </IndicatorButton>
      </IndicatorBar>

      <ChartBox $height={352}>
        <SignalChart />
        <AxisLabel $top={161} $color="#444">7028</AxisLabel>
      </ChartBox>

      <NewsTabs>
        <NewsTab $active>资讯</NewsTab>
        <NewsTab>社区</NewsTab>
        <NewsTab>期权</NewsTab>
        <NewsTab>成交</NewsTab>
        <NewsTab>关联</NewsTab>
        <NewsTab>排行</NewsTab>
        <FadedTab>基</FadedTab>
        <MenuLine />
        <RedDot $right={37} $top={17} />
      </NewsTabs>

      <Toolbar>
        <OrderButton>闪电下单</OrderButton>
        {TOOLS.map(([label, Icon]) => (
          <Tool key={label}>
            <Icon />
            {label}
          </Tool>
        ))}
      </Toolbar>
    </Screen>
  );
};

export default App;
